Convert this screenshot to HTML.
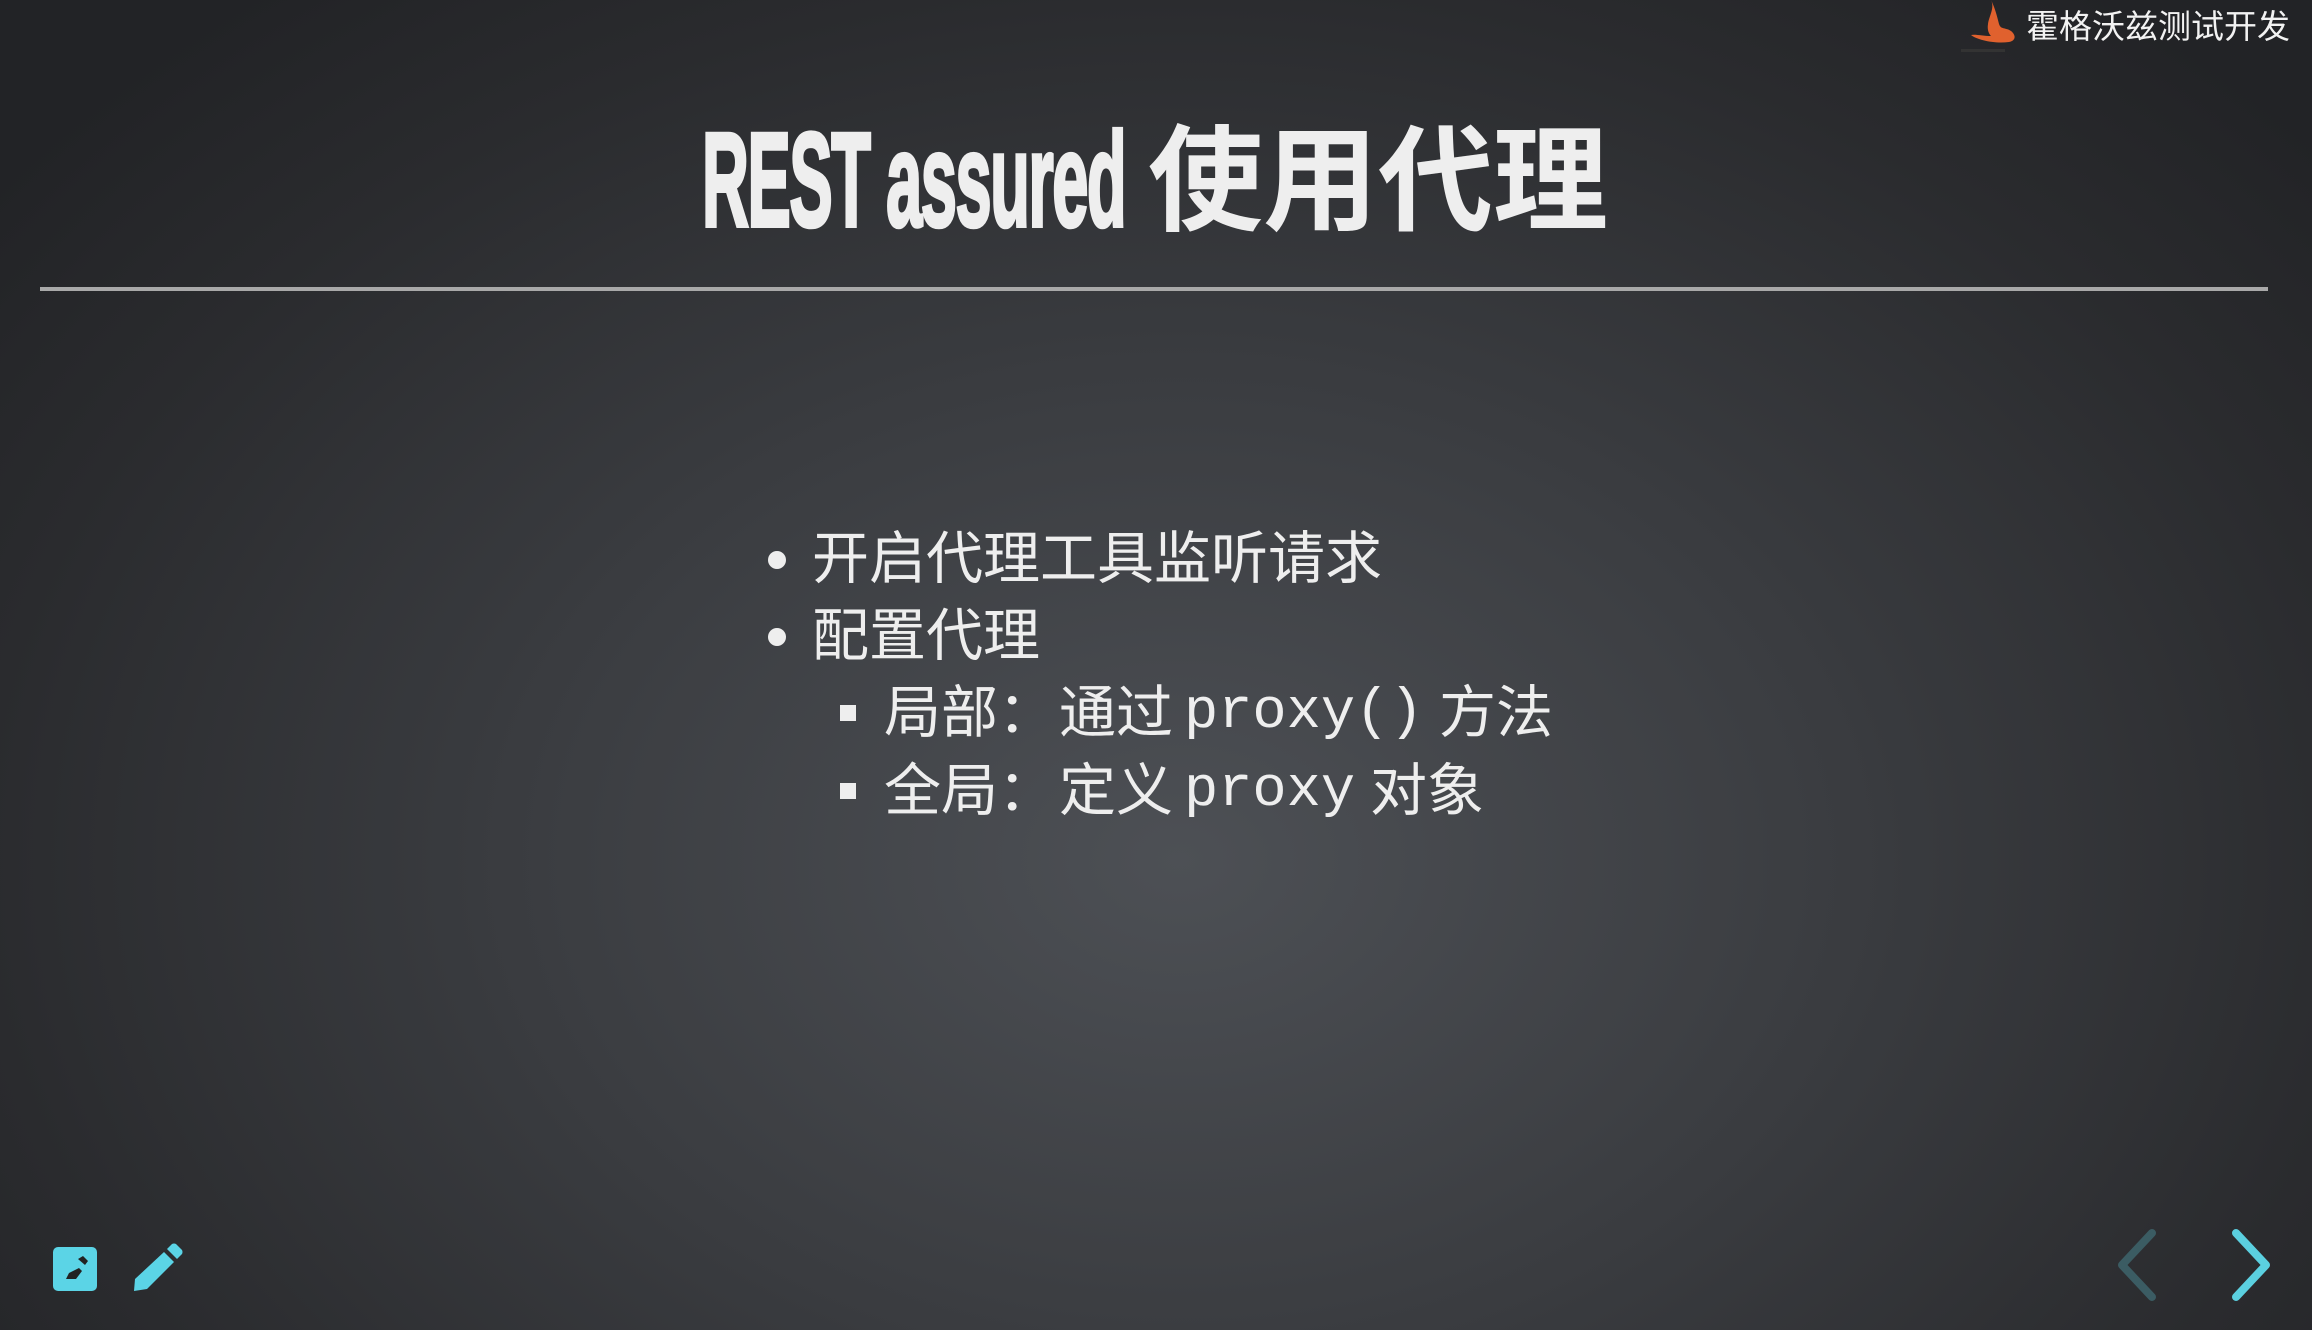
<!DOCTYPE html>
<html><head><meta charset="utf-8"><style>
html,body{margin:0;padding:0;}
body{width:2312px;height:1330px;overflow:hidden;position:relative;
background:radial-gradient(ellipse 1500px 1100px at 1180px 860px,#4d5055 0%,#3a3c40 45%,#2a2b2e 80%,#222326 100%);
font-family:"Liberation Sans","Noto Sans CJK SC",sans-serif;color:#eeeeee;}
.abs{position:absolute;white-space:nowrap;}
.title{left:700px;top:102px;height:140px;}
.lat{display:inline-block;font-family:"Liberation Sans",sans-serif;font-weight:bold;font-size:134px;transform:scaleX(0.485);transform-origin:left center;letter-spacing:-3px;position:absolute;left:2px;top:2px;-webkit-text-stroke:4px #eee;}
.cjk{position:absolute;left:448px;top:0;font-family:"Noto Sans CJK SC",sans-serif;font-weight:bold;font-size:115px;line-height:140px;}
.rule{left:40px;top:287px;width:2228px;height:4px;background:#a9a9a9;}
.li{font-size:57px;line-height:77px;font-family:"Liberation Sans","Noto Sans CJK SC",sans-serif;}
.mono{font-family:"Liberation Mono",monospace;font-size:57px;}
.dot{position:absolute;width:18px;height:18px;border-radius:50%;background:#eee;}
.sq{position:absolute;width:16px;height:16px;background:#eee;}
</style></head><body>
<div class="abs title"><span class="lat">REST assured</span><span class="cjk">使用代理</span></div>
<div class="abs rule"></div>

<div class="dot" style="left:768px;top:551px"></div>
<div class="abs li" style="left:812px;top:521px">开启代理工具监听请求</div>
<div class="dot" style="left:768px;top:628px"></div>
<div class="abs li" style="left:812px;top:598px">配置代理</div>
<div class="sq" style="left:840px;top:705px"></div>
<div class="abs li" style="left:884px;top:675px">局部：</div>
<div class="abs li" style="left:1059px;top:675px">通过</div>
<div class="abs li mono" style="left:1184px;top:675px">proxy()</div>
<div class="abs li" style="left:1439px;top:675px">方法</div>
<div class="sq" style="left:840px;top:783px"></div>
<div class="abs li" style="left:884px;top:753px">全局：</div>
<div class="abs li" style="left:1059px;top:753px">定义</div>
<div class="abs li mono" style="left:1184px;top:753px">proxy</div>
<div class="abs li" style="left:1370px;top:753px">对象</div>

<svg class="abs" style="left:1955px;top:0" width="70" height="56" viewBox="0 0 70 56">
<path d="M36 0 C40 8 34 16 33 24 C32 30 34 34 36 36 C28 36 20 34 16 35 C22 40 40 44 54 42 C60 41 62 36 56 31 C50 27 46 30 44 24 C42 16 40 8 36 0Z" fill="#e0612e"/>
<rect x="6" y="49" width="44" height="3" fill="#333"/>
</svg>
<div class="abs" style="left:2026px;top:2px;font-size:33px;line-height:44px;color:#f2f2f2;font-family:'Noto Sans CJK SC',sans-serif;">霍格沃兹测试开发</div>

<svg class="abs" style="left:53px;top:1247px" width="44" height="44" viewBox="0 0 44 44">
<rect width="44" height="44" rx="5" fill="#5bd4e6"/>
<path d="M25 12 l5 -3 l5 5 l-3 4z" fill="#222"/>
<path d="M13 32 l3 -6 l10 -5 l3 3 l-6 8z" fill="#222"/>
</svg>
<svg class="abs" style="left:131px;top:1243px" width="54" height="52" viewBox="0 0 54 52">
<path d="M33 9 L43 19 L16 46 L3 48 L4 36Z" fill="#5bd4e6"/>
<path d="M36 6 L41 1 Q43 0 45 1 L51 7 Q52 9 51 11 L46 16Z" fill="#5bd4e6"/>
</svg>
<svg class="abs" style="left:2110px;top:1225px" width="60" height="80" viewBox="0 0 60 80">
<path d="M42 8 L12 40 L42 72" fill="none" stroke="#3b5c63" stroke-width="8" stroke-linecap="round" stroke-linejoin="round"/>
</svg>
<svg class="abs" style="left:2220px;top:1225px" width="60" height="80" viewBox="0 0 60 80">
<path d="M16 8 L46 40 L16 72" fill="none" stroke="#5bd0e0" stroke-width="8" stroke-linecap="round" stroke-linejoin="round"/>
</svg>
</body></html>
